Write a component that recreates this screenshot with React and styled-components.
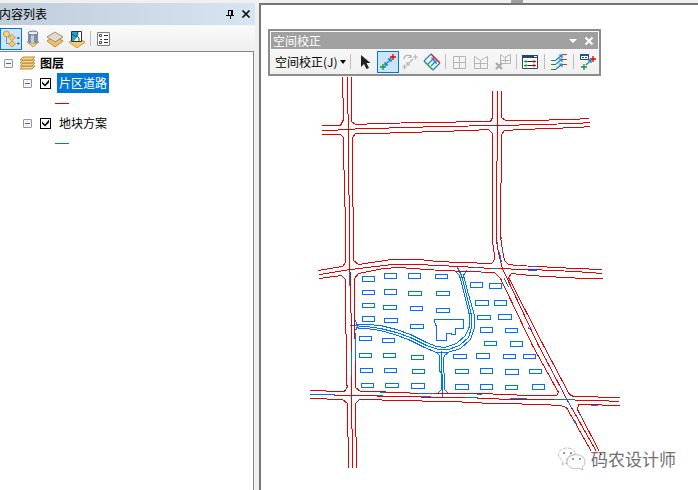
import React from "react";
import styled, { createGlobalStyle } from "styled-components";

const GlobalStyle = createGlobalStyle`
  * {
    box-sizing: border-box;
  }
  body {
    margin: 0;
    background: #f0f0f0;
    color: #000;
    font: 12px/20px "Noto Sans CJK SC", sans-serif;
  }
  button, input {
    font: inherit;
    color: inherit;
    margin: 0;
  }
`;

const Window = styled.div`
  display: flex;
  flex-direction: column;
  min-height: 100vh;
  overflow: hidden;
`;

const TopStrip = styled.div`
  display: flex;
  justify-content: center;
  height: 3px;
  padding-left: 336px;
`;

const TopGrip = styled.div`
  width: 12px;
  height: 3px;
  background: #a0a0a0;
`;

const Workspace = styled.div`
  display: flex;
  flex: 1;
  gap: 4px;
`;

const Panel = styled.aside`
  display: flex;
  flex-direction: column;
  flex: 0 0 255px;
`;

const PanelHeader = styled.header`
  display: flex;
  align-items: center;
  height: 22px;
  padding-right: 1px;
  background: linear-gradient(90deg, #bfcddb, #d7e4f2);
`;

const PanelTitle = styled.h2`
  flex: 1;
  margin: 0 0 0 -1px;
  font-size: 12px;
  font-weight: 400;
`;

const HeaderButton = styled.button`
  display: flex;
  align-items: center;
  justify-content: center;
  width: 16px;
  height: 16px;
  padding: 0;
  border: 0;
  background: none;
`;

const PanelTools = styled.div`
  display: flex;
  align-items: center;
  height: 26px;
  border-top: 1px solid #f5f5f5;
  background: linear-gradient(#fafafa, #efefef);
`;

const ToolButton = styled.button`
  display: flex;
  align-items: center;
  justify-content: center;
  flex: none;
  width: 22px;
  height: 22px;
  padding: 0;
  border: 1px solid ${props => (props.$active ? "#0078d7" : "transparent")};
  background: ${props => (props.$active ? "#cce4f7" : "none")};
`;

const Separator = styled.span`
  flex: none;
  width: 1px;
  height: 15px;
  margin: 0 ${props => props.$gap}px;
  background: #bdbdbd;
`;

const Tree = styled.ul`
  flex: 1;
  margin: 0 1px 0 0;
  padding: 1px 0 0;
  list-style: none;
  border: solid #828790;
  border-width: 1px 1px 0 0;
  background: #fff;
`;

const Branch = styled.ul`
  margin: 0;
  padding: 0 0 0 19px;
  list-style: none;
`;

const Row = styled.div`
  display: flex;
  align-items: center;
  height: 20px;
  padding-left: 4px;
`;

const Expander = styled.button`
  flex: none;
  display: flex;
  align-items: center;
  justify-content: center;
  width: 9px;
  height: 9px;
  padding: 0;
  border: 1px solid #989898;
  border-radius: 1px;
  background: #f6f6f6;

  &::before {
    content: "";
    width: 5px;
    height: 1px;
    background: #4b63a7;
  }
`;

const GroupIcon = styled.svg`
  flex: none;
  width: 17px;
  height: 14px;
  margin: 0 4px 0 6px;
`;

const RootName = styled.span`
  font-weight: 700;
`;

const Check = styled.input`
  appearance: none;
  flex: none;
  width: 11px;
  height: 11px;
  margin-left: 8px;
  border: 1px solid #000;
  background: #fff;

  &:checked::before {
    content: "";
    display: block;
    width: 9px;
    height: 9px;
    background: #000;
    clip-path: polygon(1px 3px, 4px 6px, 8px 1px, 8px 4px, 4px 8px, 1px 5px);
  }
`;

const LayerName = styled.label`
  margin-left: 6px;
  padding: 0 2px;
  color: ${props => (props.$selected ? "#fff" : "#000")};
  background: ${props => (props.$selected ? "#0078d7" : "none")};
`;

const Swatch = styled.div`
  display: flex;
  align-items: center;
  height: 20px;
  padding-left: 36px;

  &::before {
    content: "";
    width: 14px;
    height: 1px;
    background: ${props => props.$color};
  }
`;

const MapPane = styled.main`
  position: relative;
  flex: 1;
  min-width: 0;
  overflow: hidden;
  border: solid #757575;
  border-width: 2px 0 0 2px;
  background: #fff;
`;

const MapDrawing = styled.svg`
  display: block;
  fill: none;
  stroke-width: 1;
  shape-rendering: crispEdges;
`;

const FloatingBar = styled.section`
  position: absolute;
  left: 7px;
  top: 24px;
  width: 333px;
  border: 2px solid #8c8c8c;
  background: linear-gradient(#fcfcfc, #f0f0f0);
`;

const FloatingTitle = styled.header`
  display: flex;
  align-items: center;
  height: 17px;
  margin: 1px 1px 0;
  padding: 0 1px 0 2px;
  color: #fff;
  background: #a0a0a0;
`;

const FloatingName = styled.h2`
  flex: 1;
  margin: 0;
  font-size: 12px;
  font-weight: 400;
`;

const FloatingTools = styled.div`
  display: flex;
  align-items: center;
  height: 25px;
  padding-left: 5px;
`;

const MenuButton = styled.button`
  display: flex;
  align-items: center;
  gap: 2px;
  padding: 0;
  border: 0;
  background: none;
  white-space: nowrap;
`;

const Watermark = styled.div`
  position: absolute;
  right: 22px;
  bottom: 17px;
  display: flex;
  align-items: center;
  gap: 5px;
  font-size: 17px;
  line-height: 28px;
  color: #707070;
  text-shadow: -1px -1px 0 #fff;
`;

const Icon = ({ size = 18, children }) => (
  <svg width={size} height={size} viewBox={`0 0 ${size} ${size}`} fill="none" aria-hidden="true">
    {children}
  </svg>
);

const PinIcon = () => (
  <Icon size={10}>
    <path d="M3.5 5.5V1.5h4v4M1 6h8M6.5 2v4M5 6v4" stroke="#000" shapeRendering="crispEdges" />
  </Icon>
);

const CloseIcon = ({ color = "#000", width = 1.6 }) => (
  <Icon size={10}>
    <path d="M1.5 1.5l7 7M8.5 1.5l-7 7" stroke={color} strokeWidth={width} />
  </Icon>
);

const OrderIcon = () => (
  <Icon>
    <path d="M4.5 6v7.5H8M7 5l3 3" stroke="#8c8c8c" />
    <circle cx="4.5" cy="4" r="3" fill="#f4d38c" stroke="#c79b4a" />
    <path d="M10 4.500l3.500 3-3.500 3-3.500-3zM10 11l3.500 3-3.500 3-3.500-3z" fill="#f4ca78" stroke="#c79b4a" />
    <path d="M15 8h2.500M15 13.500h2.500" stroke="#29577a" strokeWidth="1.500" />
  </Icon>
);

const SourceIcon = () => (
  <Icon>
    <path d="M3 12l6-3 6 3-6 5z" fill="#f6cf73" stroke="#cc9c3d" />
    <path d="M4 3v9c0 2 10 2 10 0V3z" fill="#7d8ea6" />
    <path d="M7 4v9h3V4z" fill="#c4d0dd" />
    <ellipse cx="9" cy="3" rx="5" ry="2" fill="#e4ebf2" stroke="#63758c" />
  </Icon>
);

const VisibleIcon = () => (
  <Icon>
    <path d="M1 11l8-5 8 5-8 6z" fill="#f3be66" stroke="#c38c35" />
    <path d="M1 7l8-5 8 5-8 5z" fill="#dedbd5" stroke="#a68c61" />
  </Icon>
);

const SelectionIcon = () => (
  <Icon>
    <path d="M1 12l8-5 8 5-8 6z" fill="#f6cc71" stroke="#c59744" />
    <path d="M3.5 1.5h10v10h-10z" fill="#fff" stroke="#303030" />
    <path d="M4 2h6l-1 5-3 4H4z" fill="#18a8d4" />
    <path d="M10 2l-1 4 2 2v3M4 4l5 3" stroke="#224c60" />
  </Icon>
);

const OptionsIcon = () => (
  <Icon size={14}>
    <path d="M.5.5h12v13H.5z" fill="#fff" stroke="#808080" />
    <path d="M7 3.5h4M7 7.500h4M7 10.500h4" stroke="#333" />
    <path d="M2.500 2.500h2v2h-2zM2.500 9.500h2v2h-2z" stroke="#34506d" />
    <path d="M3 7.500h2" stroke="#34506d" />
  </Icon>
);

const LayersIcon = () => (
  <GroupIcon viewBox="0 0 17 14" aria-hidden="true">
    {[9, 6, 3, 0].map(y => (
      <path key={y} d={`M4 ${y + 1}h12l-3 3H1z`} fill="#f5d58d" stroke="#b98a3a" />
    ))}
  </GroupIcon>
);

const PointerIcon = () => (
  <Icon>
    <path d="M4 2v12l3-3 2.500 5 2.500-1-2.500-5h4z" fill="#222" />
  </Icon>
);

const LinkIcon = () => (
  <Icon>
    <path d="M1 14h6M4 11v6" stroke="#159b2c" strokeWidth="1.3" />
    <path d="M11 4h6M14 1v6" stroke="#e00000" strokeWidth="1.3" />
    <path d="M6 12l6-6M6 9v3h3M9 6h3v3" stroke="#1b83d6" strokeWidth="1.3" />
  </Icon>
);

const ModifyLinkIcon = () => (
  <Icon>
    <path d="M1 14h5M3.500 11.500v5M12 4h5M14.500 1.500v5M6 12l6-6M6 9v3h3M3 6c0-4 5-5 7-2M7.500 4.500H10V2" stroke="#b5b5b5" strokeWidth="1.200" />
  </Icon>
);

const AttachIcon = () => (
  <Icon>
    <path d="M8 1l9 9" stroke="#e01818" strokeWidth="1.5" />
    <path d="M1 8l9 9" stroke="#26a144" strokeWidth="1.5" />
    <path d="M8 1L1 8M17 10l-7 7M5 11l6-6M8 5h3v3M8 13l5-5M10 8h3v3" stroke="#1b83d6" strokeWidth="1.2" />
  </Icon>
);

const GridIcon = () => (
  <Icon>
    <path d="M3.5 3.5h12v12h-12zM9.5 3v12M3 9.5h12" stroke="#b5b5b5" />
  </Icon>
);

const WarpGridIcon = () => (
  <Icon>
    <path d="M2.5 3.5l6 4 7-4v12h-13zM8.5 7v8M2 10.5h13" stroke="#b5b5b5" />
  </Icon>
);

const ClearGridIcon = () => (
  <Icon>
    <path d="M6.5 1.5l4 3 6-3v9h-10zM11.5 4v6M7 7.5h9" stroke="#b5b5b5" />
    <path d="M2 10l6 6M8 10l-6 6" stroke="#aaa" strokeWidth="2.4" />
  </Icon>
);

const TableIcon = () => (
  <Icon>
    <path d="M1.5 2.5h15v13h-15z" fill="#fff" stroke="#284566" />
    <path d="M1 2h16v3H1z" fill="#284566" />
    <path d="M13 3.5h3" stroke="#fff" />
    <path d="M6 8.5h7M6 12.5h7" stroke="#222" />
    <path d="M3 8.5h4M5 7v3M3 12.5h4M5 11v3" stroke="#159b2c" />
    <path d="M11 8.5h4M13 7v3M11 12.5h4M13 11v3" stroke="#e00000" />
  </Icon>
);

const EdgeMatchIcon = () => (
  <Icon>
    <path d="M1 7.5h5M1 11.5h5M1 16.5h5" stroke="#258b35" />
    <path d="M12 1.5h5M12 6.5h5M12 11.5h5" stroke="#e33030" />
    <path d="M6 7l6-5M9 2h3v3M6 11l6-5M9 6h3v3M6 16l6-5M9 11h3v3" stroke="#1b83d6" strokeWidth="1.2" />
  </Icon>
);

const TransferIcon = () => (
  <Icon>
    <path d="M1.5 1.5h8v5h-8z" fill="#fff" stroke="#284566" />
    <path d="M1 1h9v2H1zM3 4h2v1H3zM6 4h2v1H6z" fill="#24528e" />
    <path d="M11 6h6M14 3v6" stroke="#e00000" strokeWidth="1.3" />
    <path d="M2 14h6M5 11v6" stroke="#258b35" strokeWidth="1.3" />
    <path d="M7 12l5-5M9 7h3v3" stroke="#1b83d6" strokeWidth="1.3" />
  </Icon>
);

const CaretIcon = ({ color = "#000", size = 6 }) => (
  <svg width={size} height="4" viewBox="0 0 6 4" preserveAspectRatio="none" aria-hidden="true">
    <path d="M0 0h6L3 4z" fill={color} />
  </svg>
);

const ChatIcon = () => (
  <svg width="29" height="26" viewBox="0 0 29 26" fill="#fff" stroke="#b0b0b0" strokeWidth=".8" aria-hidden="true">
    <path d="M5 19l1-4C-3 9 3 2 10 2c5 0 8 3 9 6-7 0-11 5-9 10l-2-1z" strokeDasharray="4 1" />
    <path d="M25 21l1 3-4-2c-6 2-12-1-12-6 0-9 17-10 18-1 0 3-1 5-3 6z" />
    <path d="M6 7h2M13 7h2M15 13h2M22 13h2" stroke="#777" strokeWidth="1.4" />
  </svg>
);

const roads = [
  // north west crossing
  "342,76 342,97 343,98 343,119 340,125 321,125",
  "347,76 347,113 348,114 349,271 350,272 351,350 351,428 352,429 352,467",
  "351,76 351,121 355,124 379,123 422,122 490,121 492,117 492,90",
  "321,130 337,130 338,129 372,128 406,127 440,126 497,125 540,124 575,123 590,122",
  "321,134 337,134 340,134 343,137 343,169 344,170 345,240 345,262 342,266 318,270",
  "590,126 577,127 549,128 521,129 504,130 501,134 501,182 500,183 500,236 502,250 504,260 508,264 517,265 556,267 575,268 602,269",
  "352,170 352,137 355,133 373,133 406,132 438,131 470,130 488,129 492,133 492,244 493,245 494,258 492,263",
  // north east crossing
  "497,90 497,160 496,161 496,241 499,257 502,268 538,345 567,400 597,453",
  "501,90 501,117 505,120 528,120 570,119 589,118",
  // middle road
  "352,170 353,240 353,260 358,264 391,259 419,259 437,261 460,262 492,263",
  "319,274 350,269 392,264 417,264 437,265 460,266 491,268 530,269 575,271 602,273",
  "319,278 341,275 345,279 345,333 346,334 346,384 347,386 344,391 326,391 325,390 309,390",
  "355,387 355,345 354,332 354,278 358,273 383,268 398,267 441,270 494,272 500,278 532,345 558,392 556,395",
  "602,278 585,278 564,277 530,275 511,273 508,277 543,345 569,394 573,396 597,396 598,397 619,397",
  // south road
  "355,387 360,391 385,391 386,392 432,393 480,393 528,395 556,395",
  "309,394 333,394 334,395 376,395 377,396 420,396 421,397 465,397 510,399 551,399 597,400 619,401",
  "309,398 326,398 327,399 342,399 347,403 347,436 348,437 348,467",
  "356,467 356,437 355,436 355,403 359,399 381,399 382,400 421,400 422,401 461,401 462,402 501,403 541,404 560,405 566,407 592,453",
  "619,405 602,405 601,404 578,404 577,409 601,455"
];

const lanes = [
  "355,330 358,324 366,324 380,325 396,329 410,334 426,342 436,346 444,347 456,343 465,335 469,326 469,315 464,294 459,275 455,271",
  "350,325 366,326 380,328 396,332 410,337 426,345 438,349 448,349 459,345 468,337 471,327 471,315 466,294 461,275 457,267",
  "355,320 358,328 366,328 380,330 394,334 408,339 424,347 436,352 447,352 460,348 470,339 474,327 474,315 468,294 463,275 466,270",
  "436,352 439,355 439,371 441,372 441,389 437,393",
  "441,350 441,373 442,374 442,397",
  "448,352 444,355 443,358 443,372 444,373 444,389 448,393"
];

// short stretches where the plot layer shows through the road layer
const overlaps = [
  "349,271 349,285", "355,332 355,360", "351,350 351,374", "344,390 347,387",
  "501,262 499,252", "497,241 497,245", "502,248 502,252", "501,236 501,238",
  "473,267 477,267", "491,268 497,268", "516,265 519,265", "530,266 536,266",
  "527,270 536,270", "480,272 483,272", "504,278 508,287", "528,327 529,329",
  "309,394 334,394", "376,395 382,395", "379,392 385,392", "417,393 433,393",
  "420,396 430,396", "465,397 477,397", "476,394 481,394", "509,398 526,398",
  "553,399 574,399", "560,387 562,390", "552,372 554,375", "545,358 546,360",
  "590,405 597,405", "578,412 582,418", "574,420 576,424", "568,401 571,408"
];

const buildings = [
  [362, 276, 13, 6], [384, 273, 13, 6], [408, 273, 13, 6], [435, 274, 13, 5],
  [362, 290, 13, 5], [384, 289, 13, 6], [408, 291, 14, 5], [436, 291, 14, 5],
  [362, 303, 13, 5], [383, 305, 14, 5], [410, 306, 13, 5], [436, 308, 14, 5],
  [362, 316, 13, 6], [384, 318, 14, 5], [410, 324, 14, 5],
  [359, 336, 13, 5], [382, 338, 13, 5],
  [359, 353, 13, 5], [383, 353, 13, 5], [411, 355, 13, 5],
  [360, 368, 13, 5], [384, 368, 13, 5], [412, 369, 13, 5],
  [361, 383, 13, 5], [385, 383, 14, 5], [411, 383, 14, 6],
  [470, 282, 13, 6], [489, 283, 13, 6], [475, 300, 14, 6], [494, 300, 13, 6],
  [477, 315, 14, 5], [498, 314, 14, 6], [480, 327, 13, 6], [505, 328, 13, 5],
  [484, 341, 13, 5], [510, 341, 13, 6],
  [453, 354, 14, 5], [476, 353, 14, 6], [503, 354, 13, 5], [523, 354, 13, 5],
  [455, 369, 14, 5], [480, 368, 13, 6], [505, 369, 14, 6], [529, 369, 13, 5],
  [455, 384, 14, 6], [480, 384, 13, 6], [505, 385, 13, 5], [532, 384, 13, 6]
];

const RoadMap = () => (
  <MapDrawing width="437" height="485" viewBox="261 5 437 485" role="img" aria-label="片区道路">
    <g transform="translate(0.5 0.5)">
      <g stroke="#0070ff">
        {lanes.map(points => <polyline key={points} points={points} />)}
        {buildings.map(([x, y, w, h]) => (
          <rect key={`${x}-${y}`} x={x} y={y} width={w - 1} height={h - 1} />
        ))}
        <polygon points="434,319 463,319 463,328 455,328 455,334 451,334 451,333 446,333 446,340 436,340 436,325 435,325" />
      </g>
      <g stroke="#e60000">
        {roads.map(points => <polyline key={points} points={points} />)}
      </g>
      <g stroke="#0070ff">
        {overlaps.map(points => <polyline key={points} points={points} />)}
      </g>
    </g>
  </MapDrawing>
);

const layers = [
  { id: "roads", name: "片区道路", color: "#e60000", selected: true },
  { id: "plots", name: "地块方案", color: "#0070ff", selected: false }
];

const Layer = ({ layer }) => (
  <li>
    <Row>
      <Expander aria-label="折叠" />
      <Check type="checkbox" id={layer.id} defaultChecked />
      <LayerName htmlFor={layer.id} $selected={layer.selected}>{layer.name}</LayerName>
    </Row>
    <Swatch $color={layer.color} />
  </li>
);

const ContentsPanel = () => (
  <Panel>
    <PanelHeader>
      <PanelTitle>内容列表</PanelTitle>
      <HeaderButton aria-label="固定"><PinIcon /></HeaderButton>
      <HeaderButton aria-label="关闭"><CloseIcon /></HeaderButton>
    </PanelHeader>
    <PanelTools>
      <ToolButton $active aria-label="按绘制顺序列出"><OrderIcon /></ToolButton>
      <ToolButton aria-label="按源列出"><SourceIcon /></ToolButton>
      <ToolButton aria-label="按可见性列出"><VisibleIcon /></ToolButton>
      <ToolButton aria-label="按选择列出"><SelectionIcon /></ToolButton>
      <Separator $gap={2} />
      <ToolButton aria-label="选项"><OptionsIcon /></ToolButton>
    </PanelTools>
    <Tree>
      <li>
        <Row>
          <Expander aria-label="折叠" />
          <LayersIcon />
          <RootName>图层</RootName>
        </Row>
        <Branch>
          {layers.map(layer => <Layer key={layer.id} layer={layer} />)}
        </Branch>
      </li>
    </Tree>
  </Panel>
);

const AdjustmentBar = () => (
  <FloatingBar>
    <FloatingTitle>
      <FloatingName>空间校正</FloatingName>
      <HeaderButton aria-label="工具栏选项"><CaretIcon color="#fff" size={8} /></HeaderButton>
      <HeaderButton aria-label="关闭"><CloseIcon color="#fff" width={2} /></HeaderButton>
    </FloatingTitle>
    <FloatingTools>
      <MenuButton>空间校正(J) <CaretIcon /></MenuButton>
      <Separator $gap={4} />
      <ToolButton aria-label="选择要素"><PointerIcon /></ToolButton>
      <ToolButton $active aria-label="新建位移链接"><LinkIcon /></ToolButton>
      <ToolButton aria-label="修改链接"><ModifyLinkIcon /></ToolButton>
      <ToolButton aria-label="多位移链接"><AttachIcon /></ToolButton>
      <Separator $gap={2} />
      <ToolButton aria-label="新建标识链接"><GridIcon /></ToolButton>
      <ToolButton aria-label="新建受限区域"><WarpGridIcon /></ToolButton>
      <ToolButton aria-label="清除受限区域"><ClearGridIcon /></ToolButton>
      <Separator $gap={2} />
      <ToolButton aria-label="查看链接表"><TableIcon /></ToolButton>
      <Separator $gap={3} />
      <ToolButton aria-label="边匹配"><EdgeMatchIcon /></ToolButton>
      <Separator $gap={3} />
      <ToolButton aria-label="属性传递"><TransferIcon /></ToolButton>
    </FloatingTools>
  </FloatingBar>
);

const App = () => (
  <Window>
    <GlobalStyle />
    <TopStrip>
      <TopGrip />
    </TopStrip>
    <Workspace>
      <ContentsPanel />
      <MapPane>
        <RoadMap />
        <AdjustmentBar />
        <Watermark>
          <ChatIcon />
          <span>码农设计师</span>
        </Watermark>
      </MapPane>
    </Workspace>
  </Window>
);

export default App;
